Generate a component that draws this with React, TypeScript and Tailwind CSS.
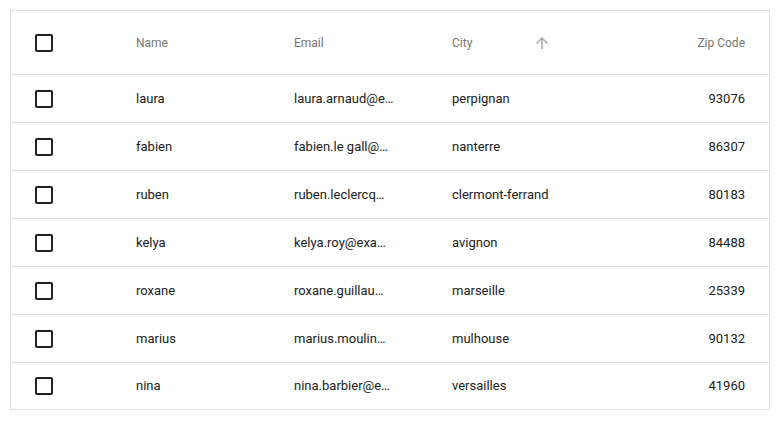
const ROWS = [
  { name: "laura", email: "laura.arnaud@e…", city: "perpignan", zip: "93076" },
  { name: "fabien", email: "fabien.le gall@…", city: "nanterre", zip: "86307" },
  { name: "ruben", email: "ruben.leclercq…", city: "clermont-ferrand", zip: "80183" },
  { name: "kelya", email: "kelya.roy@exa…", city: "avignon", zip: "84488" },
  { name: "roxane", email: "roxane.guillau…", city: "marseille", zip: "25339" },
  { name: "marius", email: "marius.moulin…", city: "mulhouse", zip: "90132" },
  { name: "nina", email: "nina.barbier@e…", city: "versailles", zip: "41960" },
];

const GRID = "grid grid-cols-[101px_158px_158px_158px_1fr] items-center";

function Checkbox() {
  return <span className="block h-[18px] w-[18px] rounded-[2px] border-2 border-[#222222]" />;
}

function ArrowUp() {
  return (
    <svg viewBox="0 0 24 24" className="h-[18px] w-[18px] fill-current text-[#a8a8a8]">
      <path d="M4 12l1.41 1.41L11 7.83V20h2V7.83l5.58 5.59L20 12l-8-8-8 8z" />
    </svg>
  );
}

export default function App() {
  return (
    <div className="min-h-[422px] bg-white pl-[10px] pt-[10px] font-['Roboto',sans-serif]">
      <div className="w-[760px] border border-[#e0e0e0]">
        {/* header */}
        <div className={`${GRID} h-[64px] border-b border-[#e0e0e0] text-[12px] text-[#757575]`}>
          <div className="pl-[24px]">
            <Checkbox />
          </div>
          <div className="pl-[24px]">Name</div>
          <div className="pl-[24px]">Email</div>
          <div className="flex items-center justify-between pl-[24px] pr-[35px]">
            <span>City</span>
            <ArrowUp />
          </div>
          <div className="pr-[24px] text-right">Zip Code</div>
        </div>

        {ROWS.map((row, i) => {
          const last = i === ROWS.length - 1;
          return (
            <div
              key={row.name}
              className={`${GRID} text-[13px] text-[#212121] ${last ? "h-[46px]" : "h-[48px] border-b border-[#e0e0e0]"}`}
            >
              <div className="pl-[24px]">
                <Checkbox />
              </div>
              <div className="pl-[24px]">{row.name}</div>
              <div className="whitespace-nowrap pl-[24px]">{row.email}</div>
              <div className="pl-[24px]">{row.city}</div>
              <div className="pr-[24px] text-right">{row.zip}</div>
            </div>
          );
        })}
      </div>
    </div>
  );
}
